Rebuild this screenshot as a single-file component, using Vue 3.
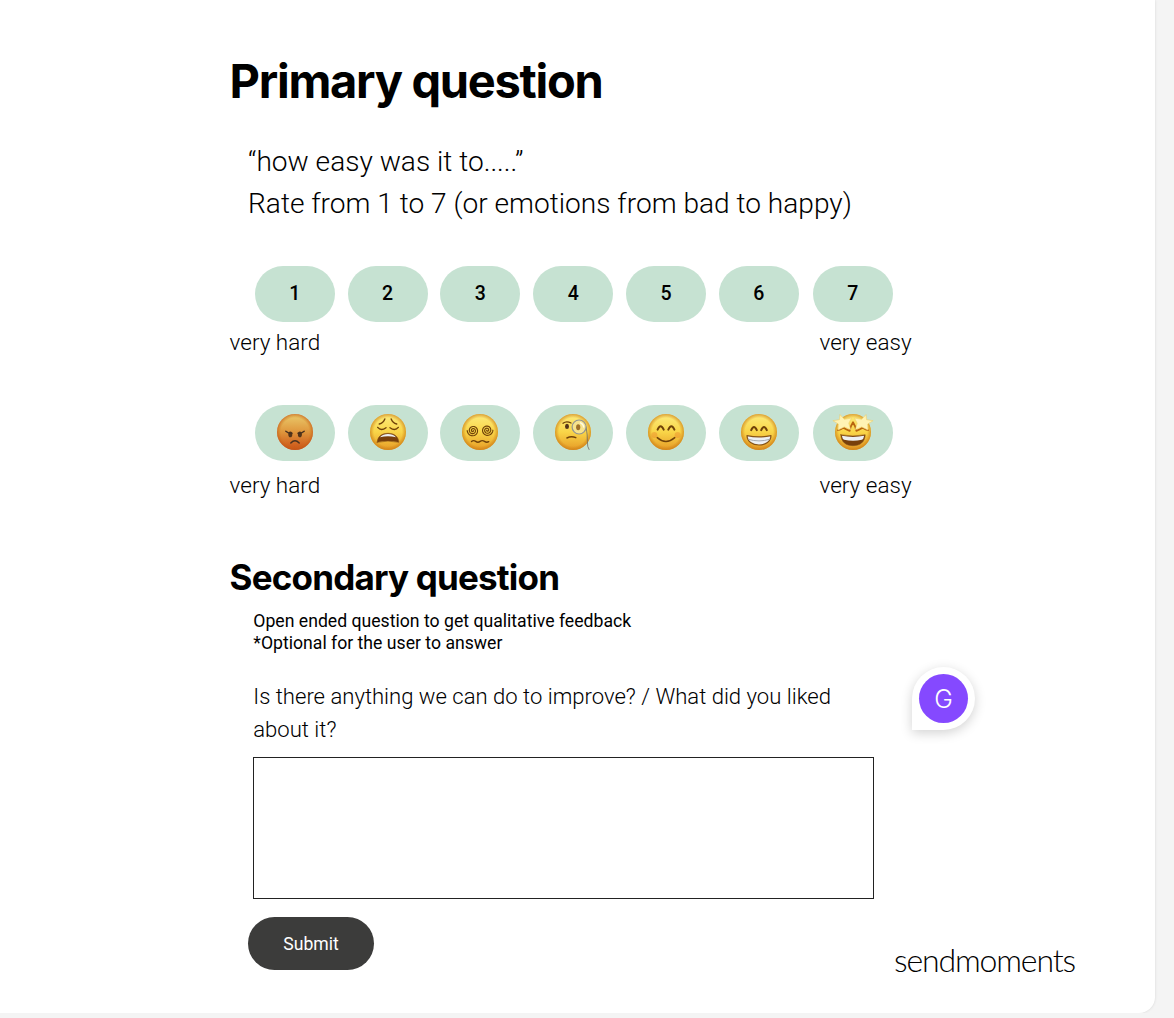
<template>
  <div class="survey-card">
    <main class="survey">
      <h1>Primary question</h1>
      <div class="intro">
        <p class="intro-quote">“how easy was it to.....”</p>
        <p class="intro-rate">Rate from 1 to 7 (or emotions from bad to happy)</p>
      </div>

      <div class="scale">
        <button v-for="n in 7" :key="n" class="pill" @click="score = n">{{ n }}</button>
      </div>
      <div class="labels">
        <span>very hard</span>
        <span>very easy</span>
      </div>

      <div class="scale emotions">
        <button v-for="mood in moods" :key="mood" class="pill" :aria-label="mood" @click="emotion = mood">
          <svg class="face" viewBox="0 0 40 40">
            <defs>
              <linearGradient :id="'skin-' + mood" x1="0" y1="0" x2="0" y2="1">
                <stop offset="0" :stop-color="mood === 'angry' ? '#eacb6c' : '#fdec7c'" />
                <stop offset=".5" :stop-color="mood === 'angry' ? '#df963c' : '#f9d548'" />
                <stop offset="1" :stop-color="mood === 'angry' ? '#cb4f15' : '#e69b26'" />
              </linearGradient>
              <radialGradient :id="'edge-' + mood">
                <stop offset=".78" stop-color="#c87812" stop-opacity="0" />
                <stop offset="1" :stop-color="mood === 'angry' ? '#c4541a' : '#c87812'" stop-opacity=".65" />
              </radialGradient>
            </defs>
            <circle cx="20" cy="20" r="18" :fill="`url(#skin-${mood})`" />
            <circle cx="20" cy="20" r="18" :fill="`url(#edge-${mood})`" />

            <g v-if="mood === 'angry'" class="line">
              <ellipse class="fill" cx="15.3" cy="22.4" rx="2" ry="2.8" />
              <ellipse class="fill" cx="24.9" cy="22.4" rx="2" ry="2.8" />
              <path class="dark" d="M10.8 19.2Q13.2 21.4 17 21.3M29.2 19.2Q26.8 21.4 23 21.3" />
              <path class="dark" d="M15.8 31Q20 26.6 24.2 31" />
            </g>

            <g v-if="mood === 'weary'" class="line">
              <path d="M11.3 12Q15.3 11 16.8 7M28.7 12Q24.7 11 23.2 7" />
              <path d="M9.7 15.4Q13 19.3 18 15.7M30.3 15.4Q27 19.3 22 15.7" />
              <path class="mouth" d="M9.2 30.3C9.5 24.4 14 21.3 20 21.3S30.5 24.4 30.8 30.3Q20 27.8 9.2 30.3Z" />
              <path class="teeth" d="M12 25.2Q15 21.9 20 21.9T28 25.2Q20 23.3 12 25.2Z" />
            </g>

            <g v-if="mood === 'dizzy'" class="line">
              <path class="thin" :d="spiral(12.9, 18.6, 1)" />
              <path class="thin" :d="spiral(27.2, 18.2, -1)" />
              <path d="M11.5 29.6q2-1.8 4.2-.2t4.4 0t4.4 0t4.2.3" />
            </g>

            <g v-if="mood === 'skeptical'" class="line">
              <path d="M10 11.2Q13.5 8.6 18 11" />
              <ellipse class="fill" cx="14" cy="14.4" rx="2" ry="2.6" />
              <path d="M13.9 26Q18.5 23.8 22.8 25.7" />
              <path class="cord" d="M33.2 15Q34.6 24 34.4 29.5T36 37.5" />
              <circle class="lens" cx="26.1" cy="15" r="7" />
              <ellipse class="iris" cx="25.2" cy="15.2" rx="2.1" ry="3" />
              <path class="glint" d="M27.5 10.8Q30.5 12 30.7 15" />
            </g>

            <g v-if="mood === 'happy'" class="line">
              <path class="thick" d="M11.6 17.6Q14.6 10.8 17.7 17.6M22.3 17.6Q25.4 10.8 28.4 17.6" />
              <path d="M11.2 25.6Q19.9 33.2 28.8 25.6" />
              <circle class="blush" cx="8.4" cy="23" r="3" />
              <circle class="blush" cx="31.6" cy="23" r="3" />
            </g>

            <g v-if="mood === 'grinning'" class="line">
              <path class="thick" d="M12.2 18.1Q15 11.8 17.8 18.1M22.2 18.1Q25 11.8 27.8 18.1" />
              <path class="smile" d="M8 23.6Q20 26.2 32 23.6C31.8 29.7 26.7 33 20 33S8.2 29.7 8 23.6Z" />
              <path class="tooth-line" d="M9.2 27.3Q20 30.6 30.8 27.3" />
            </g>

            <g v-if="mood === 'starry'" class="line">
              <path class="mouth" d="M7.8 22.8Q20 25.3 32.2 22.8C31.9 30.2 27 33.7 20 33.7S8.1 30.2 7.8 22.8Z" />
              <path class="teeth" d="M8.8 23.8Q20 26.1 31.2 23.8Q30.5 27.4 28.8 27.8Q20 29.5 11.2 27.8Q9.5 27.3 8.8 23.8Z" />
              <path class="star-shade" d="M5 18.2Q7 17.8 10.4 15.8Q13.5 17.8 16.6 18.9Q17.6 14 20 10.3Q22.4 14 23.4 18.9Q26.5 17.8 29.6 15.8Q33 17.8 35 18.2" />
              <path class="star" d="M7.2 2.8l4.2 4.5 7.2-1.3-2.8 5.2 1.8 6.5-6.2-2.8-6.4 3.2.3-6.1-5.4-3.3 6.2-1Z" />
              <path class="star" d="M32.8 2.8l-4.2 4.5-7.2-1.3 2.8 5.2-1.8 6.5 6.2-2.8 6.4 3.2-.3-6.1 5.4-3.3-6.2-1Z" />
            </g>
          </svg>
        </button>
      </div>
      <div class="labels emotion-labels">
        <span>very hard</span>
        <span>very easy</span>
      </div>

      <h2>Secondary question</h2>
      <div class="feedback">
        <p class="note">Open ended question to get qualitative feedback<br>*Optional for the user to answer</p>
        <label class="ask" for="answer">Is there anything we can do to improve? / What did you liked<br>about it?</label>
        <textarea id="answer" v-model="answer"></textarea>
      </div>
      <button class="submit">Submit</button>
    </main>

    <div class="avatar"><span>G</span></div>
    <div class="brand">sendmoments</div>
  </div>
</template>

<script setup>
import { ref } from 'vue'

const moods = ['angry', 'weary', 'dizzy', 'skeptical', 'happy', 'grinning', 'starry']
const score = ref(null)
const emotion = ref(null)
const answer = ref('')

// dir: 1 winds clockwise, -1 is its mirror
function spiral(cx, cy, dir) {
  const points = []
  for (let i = 0; i <= 60; i++) {
    const angle = (i / 60) * Math.PI * 5
    const r = 0.4 + (i / 60) * 5.3
    const x = cx + dir * r * Math.cos(angle)
    const y = cy + r * Math.sin(angle)
    points.push(`${x.toFixed(2)} ${y.toFixed(2)}`)
  }
  return 'M' + points.join('L')
}
</script>

<style>
body {
  margin: 0;
  background: #f4f4f4;
}
</style>

<style scoped>
.survey-card {
  position: relative;
  box-sizing: border-box;
  width: 1155px;
  height: 1013px;
  padding: 52px 0 0 229.6px;
  background: #fff;
  border-radius: 0 0 16px 0;
  box-shadow: 0 0 3px rgba(0, 0, 0, .12);
  color: #000;
  font-family: Roboto, sans-serif;
  overflow: hidden;
}

.survey {
  display: flex;
  flex-direction: column;
  width: 682px;
}

h1,
h2,
p {
  margin: 0;
}

h1,
h2 {
  font-family: Inter, sans-serif;
  font-weight: 700;
  white-space: nowrap;
}

h1 {
  height: 89px;
  font-size: 47px;
  line-height: 58px;
  letter-spacing: -1.28px;
}

.intro {
  height: 125px;
  padding-left: 18.4px;
  font-size: 28.1px;
  font-weight: 300;
  line-height: 42px;
  white-space: nowrap;
}

.scale {
  display: flex;
  gap: 12.8px;
  padding-left: 25.2px;
}

.pill {
  display: flex;
  align-items: center;
  justify-content: center;
  width: 80px;
  height: 56px;
  padding: 0;
  border: 0;
  border-radius: 28px;
  background: #c6e2d2;
  color: #000;
  font: 500 19.5px/26px Roboto, sans-serif;
}

.pill:last-child {
  margin-left: 1.2px;
}

.labels {
  display: flex;
  justify-content: space-between;
  height: 83px;
  padding-top: 5px;
  box-sizing: border-box;
  font-size: 22.5px;
  font-weight: 300;
  line-height: 30px;
}

.emotion-labels {
  height: 94px;
  padding-top: 9px;
}

.face {
  width: 40px;
  height: 40px;
  margin-bottom: 2px;
  overflow: visible;
}

.line {
  fill: none;
  stroke: #704209;
  stroke-width: 1.4;
  stroke-linecap: round;
  stroke-linejoin: round;
}

.fill {
  fill: #54351a;
  stroke: none;
}

.dark {
  stroke: #49311f;
}

.thin {
  stroke-width: 1.15;
}

.thick {
  stroke-width: 2;
}

.mouth {
  fill: #783f0b;
  stroke: #85501a;
  stroke-width: .6;
}

.teeth {
  fill: #edf0f3;
  stroke: none;
}

.cord {
  stroke: #6c6964;
  stroke-width: .8;
}

.lens {
  fill: #f7e38c;
  stroke: #929492;
  stroke-width: 1.2;
}

.iris {
  fill: #a07028;
  stroke: none;
}

.glint {
  stroke: #fffbe4;
}

.blush {
  fill: #e77926;
  fill-opacity: .35;
  stroke: none;
}

.smile {
  fill: #edf0f3;
  stroke: #875315;
  stroke-width: 1.2;
}

.tooth-line {
  stroke: #9da1a7;
  stroke-width: .9;
}

.star {
  fill: #fff3b4;
  stroke: #efcf6c;
  stroke-width: .6;
}

.star-shade {
  stroke: #b8650f;
  stroke-width: 1.8;
}

h2 {
  height: 55px;
  font-size: 35px;
  line-height: 45px;
  letter-spacing: -.8px;
}

.feedback {
  display: flex;
  flex-direction: column;
  padding-left: 23.7px;
}

.note {
  height: 70px;
  font-size: 17.65px;
  line-height: 22px;
}

.ask {
  height: 77px;
  font-size: 22.08px;
  font-weight: 300;
  line-height: 33px;
  white-space: nowrap;
}

textarea {
  box-sizing: border-box;
  width: 621px;
  height: 142px;
  border: 1px solid #222;
  border-radius: 0;
  background: #fff;
  resize: none;
}

.submit {
  width: 126.5px;
  height: 53px;
  margin: 18px 0 0 18.2px;
  padding: 0;
  border: 0;
  border-radius: 27px;
  background: #3c3c3b;
  color: #fff;
  font: 400 17.6px/24px Roboto, sans-serif;
}

/* floating user bubble */
.avatar {
  position: absolute;
  top: 667px;
  left: 912px;
  display: grid;
  place-items: center;
  width: 63px;
  height: 63px;
  border-radius: 50% 50% 50% 0;
  background: #fff;
  box-shadow: 0 3px 12px rgba(0, 0, 0, .18);
}

.avatar span {
  width: 49px;
  height: 49px;
  border-radius: 50%;
  background: #8549ff;
  color: #fff;
  font: 300 25px/50px Inter, sans-serif;
  text-align: center;
}

.brand {
  position: absolute;
  right: 79px;
  bottom: 33px;
  width: 182px;
  font: 300 32px/40px Lato, sans-serif;
  letter-spacing: -1.15px;
}
</style>
